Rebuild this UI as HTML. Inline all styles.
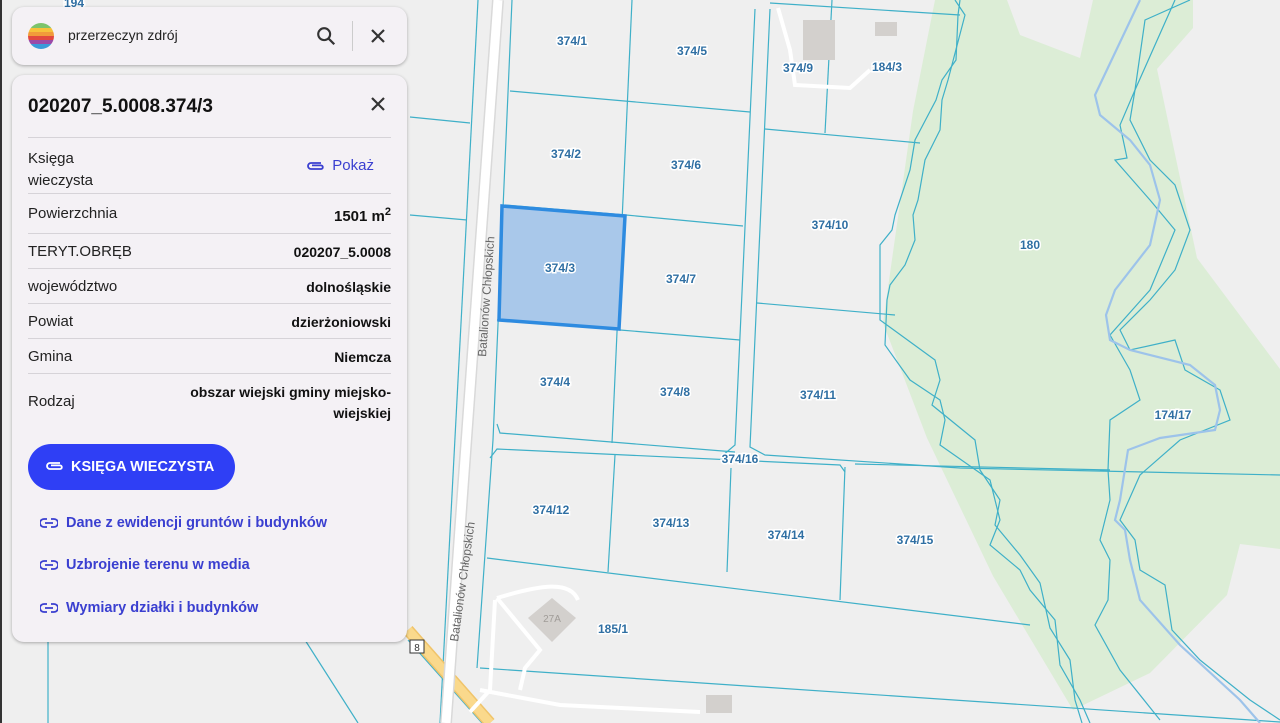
<!DOCTYPE html>
<html><head><meta charset="utf-8"><style>
*{margin:0;padding:0;box-sizing:border-box}
body{width:1280px;height:723px;overflow:hidden;background:#efefef;font-family:"Liberation Sans",sans-serif;position:relative}
svg.map{position:absolute;left:0;top:0}
.lbl{font:bold 12px "Liberation Sans",sans-serif;fill:#2f6fa3;stroke:#fff;stroke-width:3px;paint-order:stroke;text-anchor:middle}
.card{position:absolute;left:12px;background:#f4f1f5;border-radius:12px;box-shadow:0 1px 3px rgba(0,0,0,.3)}
.row{position:absolute;left:16px;right:16px;border-top:1px solid #d6d3d8;font-size:15px;color:#222}
.row .k{position:absolute;left:0}
.row .v{position:absolute;right:0;font-weight:bold;text-align:right;font-size:14px;color:#111}
.link{position:absolute;left:28px;color:#3a3fd0;font-size:14.5px;font-weight:bold}
.link svg{vertical-align:middle;margin-right:8px}
</style></head><body>
<div style="position:absolute;left:0;top:0;width:2px;height:723px;background:#333"></div>
<svg class="map" width="1280" height="723" viewBox="0 0 1280 723">
<polygon fill="#dcedd6" points="935,0 1007,0 1020,35 1080,58 1093,0 1193,0 1193,28 1157,69 1197,258 1280,369 1280,549 1240,544 1227,595 1150,673 1073,710 993,576 927,438 883,323 913,111"/>
<polygon fill="#fff" points="1193,0 1280,0 1280,369 1197,258 1157,69 1193,28" opacity="0"/>
<g fill="none" stroke="#3fb0c8" stroke-width="1.2">
<path d="M478,0 L440,723"/>
<path d="M512,0 L493,440 L477,668"/>
<path d="M510,91 L750,112"/>
<path d="M505,205 L626,215 L743,226"/>
<path d="M497,320 L620,330 L740,340"/>
<path d="M497,424 L500,433 L735,452"/>
<path d="M632,0 L612,443"/>
<path d="M755,9 L735,445 L722,456"/>
<path d="M770,9 L750,447 L765,455 L960,468 L1280,475"/>
<path d="M490,458 L497,449 L840,465 L845,472"/>
<path d="M855,464 L1110,470"/>
<path d="M615,455 L608,572"/>
<path d="M731,468 L727,572"/>
<path d="M845,467 L840,600"/>
<path d="M487,558 L1030,625"/>
<path d="M480,668 L1280,722"/>
<path d="M832,0 L825,133"/>
<path d="M765,129 L920,143"/>
<path d="M757,303 L895,315"/>
<path d="M770,3 L960,15"/>
<path d="M410,117 L470,123"/>
<path d="M410,215 L467,220"/>
<path d="M48,640 L48,723"/>
<path d="M305,640 L358,723"/>
<path d="M408,640 L482,723"/>
<path d="M955,0 L965,15 L948,80 L942,100 L940,130 L925,160 L918,200 L913,215 L915,240 L905,265 L890,285 L887,300 L885,345 L910,380 L940,400 L945,420 L940,445 L990,480 L1000,520 L990,545 L1020,570 L1030,590 L1055,620 L1060,665 L1080,700 L1090,723"/>
<path d="M960,0 L958,15 L956,60 L942,80 L936,100 L915,140 L910,170 L900,200 L895,215 L892,230 L880,245 L880,320 L935,360 L940,380 L932,405 L975,440 L980,470 L1000,500 L995,525 L1020,555 L1040,583 L1050,628 L1070,660 L1075,700 L1082,723"/>
<path d="M1175,0 L1135,90 L1120,125 L1127,158 L1115,160 L1150,200 L1175,230 L1150,290 L1110,335 L1130,370 L1140,400 L1110,420 L1108,470 L1110,500 L1100,540 L1110,560 L1108,600 L1095,625 L1120,670 L1160,720"/>
<path d="M1190,0 L1145,20 L1135,90 L1130,120 L1150,160 L1175,185 L1190,230 L1175,270 L1150,300 L1120,330 L1130,350 L1175,340 L1185,370 L1220,390 L1230,420 L1180,440 L1140,475 L1120,520 L1135,540 L1140,570 L1165,585 L1172,630 L1200,660 L1250,700 L1280,720"/>
<path d="M1100,470 L1110,470"/>
</g>
<path d="M1140,0 L1095,95 L1100,115 L1130,140 L1150,165 L1160,200 L1150,245 L1115,290 L1106,315 L1110,340 L1130,350 L1190,365 L1215,385 L1220,410 L1215,430 L1160,438 L1128,450 L1120,500 L1115,520 L1125,530 L1130,560 L1140,600 L1180,645 L1240,700 L1260,723" fill="none" stroke="#9dc3ea" stroke-width="2.2"/>
<path d="M408,630 L490,723" stroke="#f0c46a" stroke-width="12" fill="none"/>
<path d="M408,630 L490,723" stroke="#fad98c" stroke-width="9" fill="none"/>
<path d="M498,0 L446,723" stroke="#d9d9d9" stroke-width="12" fill="none"/>
<path d="M498,0 L446,723" stroke="#fff" stroke-width="9" fill="none"/>
<g fill="none" stroke="#fff" stroke-width="4">
<path d="M497,598 C540,585 570,580 578,600"/>
<path d="M497,598 L540,650 L525,668 L520,690"/>
<path d="M495,600 L490,690 L470,712"/>
<path d="M778,8 L790,50 L795,85 L850,88 L870,70"/>
<path d="M480,690 L560,705 L700,712"/>
</g>
<rect x="803" y="20" width="32" height="40" fill="#d3d0cd"/>
<rect x="875" y="22" width="22" height="14" fill="#d3d0cd"/>
<rect x="706" y="695" width="26" height="18" fill="#d3d0cd"/>
<polygon points="552,598 576,618 552,642 528,618" fill="#d3d0cd"/>
<text x="552" y="622" font-size="10" fill="#a09c98" text-anchor="middle">27A</text>
<polygon points="502,206 625,216 619,329 499,320" fill="#a9c8ea" stroke="#2e8be0" stroke-width="3.5"/>
<rect x="410" y="640" width="14" height="13" fill="#fff" stroke="#333"/>
<text x="417" y="651" font-size="10" text-anchor="middle" fill="#333">8</text>
<text class="lbl" x="572" y="45">374/1</text>
<text class="lbl" x="692" y="55">374/5</text>
<text class="lbl" x="798" y="72">374/9</text>
<text class="lbl" x="887" y="71">184/3</text>
<text class="lbl" x="566" y="158">374/2</text>
<text class="lbl" x="686" y="169">374/6</text>
<text class="lbl" x="560" y="272">374/3</text>
<text class="lbl" x="681" y="283">374/7</text>
<text class="lbl" x="830" y="229">374/10</text>
<text class="lbl" x="1030" y="249">180</text>
<text class="lbl" x="555" y="386">374/4</text>
<text class="lbl" x="675" y="396">374/8</text>
<text class="lbl" x="818" y="399">374/11</text>
<text class="lbl" x="1173" y="419">174/17</text>
<text class="lbl" x="740" y="463">374/16</text>
<text class="lbl" x="551" y="514">374/12</text>
<text class="lbl" x="671" y="527">374/13</text>
<text class="lbl" x="786" y="539">374/14</text>
<text class="lbl" x="915" y="544">374/15</text>
<text class="lbl" x="613" y="633">185/1</text>
<text class="lbl" x="74" y="7">194</text>
<text x="0" y="0" font-size="12" fill="#666" transform="translate(486,357) rotate(-86)">Batalionów Chłopskich</text>
<text x="0" y="0" font-size="12" fill="#666" transform="translate(458,642) rotate(-82)">Batalionów Chłopskich</text>
</svg>

<div class="card" style="top:7px;width:395px;height:58px">
  <svg style="position:absolute;left:16px;top:16px" width="26" height="26" viewBox="0 0 26 26">
    <clipPath id="c"><circle cx="13" cy="13" r="13"/></clipPath>
    <g clip-path="url(#c)">
      <rect y="0" width="26" height="5" fill="#7cc46b"/><rect y="5" width="26" height="4" fill="#f6c13a"/>
      <rect y="9" width="26" height="4" fill="#f19a3a"/><rect y="13" width="26" height="4" fill="#e2483f"/>
      <rect y="17" width="26" height="4" fill="#9b4aa8"/><rect y="21" width="26" height="5" fill="#3a9ad9"/>
    </g>
  </svg>
  <div style="position:absolute;left:56px;top:20px;font-size:14px;color:#222">przerzeczyn zdrój</div>
  <svg style="position:absolute;left:303px;top:18px" width="22" height="22" viewBox="0 0 24 24"><circle cx="10" cy="10" r="6.5" fill="none" stroke="#333" stroke-width="2.3"/><path d="M15 15 L21 21" stroke="#333" stroke-width="2.5"/></svg>
  <div style="position:absolute;left:340px;top:14px;width:1px;height:30px;background:#ccc"></div>
  <svg style="position:absolute;left:357px;top:20px" width="18" height="18" viewBox="0 0 18 18"><path d="M3 3L15 15M15 3L3 15" stroke="#333" stroke-width="2.2"/></svg>
</div>

<div class="card" style="top:75px;width:395px;height:567px">
  <div style="position:absolute;left:16px;top:21px;font-size:19px;font-weight:bold;color:#111">020207_5.0008.374/3</div>
  <svg style="position:absolute;left:357px;top:20px" width="18" height="18" viewBox="0 0 18 18"><path d="M3 3L15 15M15 3L3 15" stroke="#333" stroke-width="2.2"/></svg>
  <div class="row" style="top:62px;height:56px"><span class="k" style="top:10px;line-height:22px">Księga<br>wieczysta</span>
    <span style="position:absolute;right:17px;top:19px;color:#3a3fd0;font-size:15px"><svg width="20" height="12" viewBox="0 0 20 12" style="vertical-align:middle;margin-right:6px"><path d="M15 3H5a3 3 0 0 0 0 6h10a1.8 1.8 0 0 0 0-3.6H6" fill="none" stroke="#3a3fd0" stroke-width="1.8"/></svg>Pokaż</span></div>
  <div class="row" style="top:118px;height:40px"><span class="k" style="top:11px">Powierzchnia</span><span class="v" style="top:12px;font-size:15px">1501 m<sup style="font-size:11px">2</sup></span></div>
  <div class="row" style="top:158px;height:35px"><span class="k" style="top:9px">TERYT.OBRĘB</span><span class="v" style="top:10px">020207_5.0008</span></div>
  <div class="row" style="top:193px;height:35px"><span class="k" style="top:9px">województwo</span><span class="v" style="top:10px">dolnośląskie</span></div>
  <div class="row" style="top:228px;height:35px"><span class="k" style="top:9px">Powiat</span><span class="v" style="top:10px">dzierżoniowski</span></div>
  <div class="row" style="top:263px;height:35px"><span class="k" style="top:9px">Gmina</span><span class="v" style="top:10px">Niemcza</span></div>
  <div class="row" style="top:298px;height:55px"><span class="k" style="top:19px">Rodzaj</span><span class="v" style="top:8px;line-height:21px">obszar wiejski gminy miejsko-<br>wiejskiej</span></div>
  <div style="position:absolute;left:16px;top:369px;width:207px;height:46px;border-radius:23px;background:#2f3ff5;color:#fff;font-weight:bold;font-size:14.5px;line-height:46px;padding-left:17px">
    <svg width="20" height="12" viewBox="0 0 20 12" style="vertical-align:middle;margin-right:6px;margin-top:-2px"><path d="M15 3H5a3 3 0 0 0 0 6h10a1.8 1.8 0 0 0 0-3.6H6" fill="none" stroke="#fff" stroke-width="1.8"/></svg>KSIĘGA WIECZYSTA</div>
  <div class="link" style="top:440px"><svg width="18" height="10" viewBox="0 0 18 10"><path d="M7 1H4a4 4 0 0 0 0 8h3M11 1h3a4 4 0 0 1 0 8h-3M5 5h8" fill="none" stroke="#3a3fd0" stroke-width="1.8"/></svg>Dane z ewidencji gruntów i budynków</div>
  <div class="link" style="top:482px"><svg width="18" height="10" viewBox="0 0 18 10"><path d="M7 1H4a4 4 0 0 0 0 8h3M11 1h3a4 4 0 0 1 0 8h-3M5 5h8" fill="none" stroke="#3a3fd0" stroke-width="1.8"/></svg>Uzbrojenie terenu w media</div>
  <div class="link" style="top:525px"><svg width="18" height="10" viewBox="0 0 18 10"><path d="M7 1H4a4 4 0 0 0 0 8h3M11 1h3a4 4 0 0 1 0 8h-3M5 5h8" fill="none" stroke="#3a3fd0" stroke-width="1.8"/></svg>Wymiary działki i budynków</div>
</div>
</body></html>
